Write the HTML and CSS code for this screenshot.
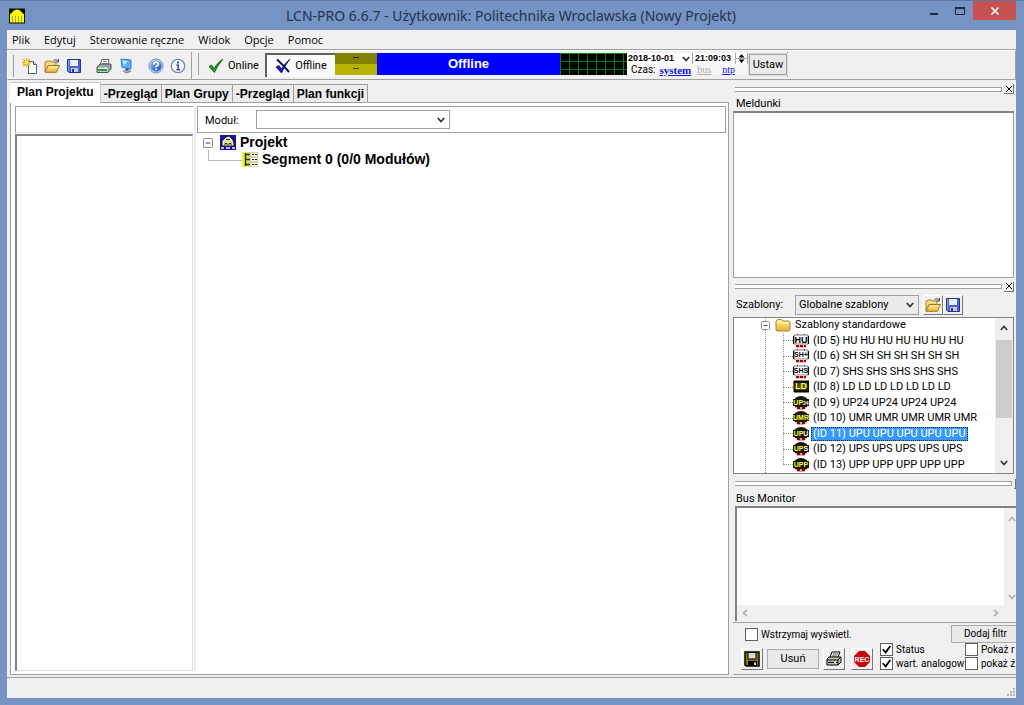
FILE: index.html
```html
<!DOCTYPE html>
<html lang="pl">
<head>
<meta charset="utf-8">
<title>LCN-PRO 6.6.7</title>
<link rel="stylesheet" href="styles.css">
</head>
<body>
<svg class="defs" aria-hidden="true">
  <defs>
    <linearGradient id="gFolder" x1="0" y1="0" x2="0" y2="1"><stop offset="0" stop-color="#fff0a0"/><stop offset="1" stop-color="#e6b030"/></linearGradient>
    <linearGradient id="gBlue" x1="0" y1="0" x2="1" y2="1"><stop offset="0" stop-color="#8ab4f4"/><stop offset="1" stop-color="#1c50b8"/></linearGradient>
  </defs>
  <symbol id="open" viewBox="0 0 16 16">
    <path d="M1 14V4h1l1-1h4l1 1h4v3" fill="#f4d880" stroke="#a8822c"/>
    <path d="M1 14.3 4 7.5h11.5L12.3 14.3z" fill="url(#gFolder)" stroke="#a07818"/>
    <path d="M9.500 2.500q2.500-2 4.500.500M14.500 1v3h-3" fill="none" stroke="#3c4c68"/>
  </symbol>
  <symbol id="save" viewBox="0 0 16 16">
    <path d="M1.500 1.500h13v13H3l-1.500-1.500z" fill="#4a62d0" stroke="#26349a"/>
    <path d="M4 2h8v6H4z" fill="#e8f0ff"/><path d="M5 10h7v4H5z" fill="#c8ccd8"/><path d="M6 11h2v3H6z" fill="#2c3c90"/>
    <path d="M2.500 2v11" stroke="#8c9cf0"/>
  </symbol>
  <symbol id="chev" viewBox="0 0 8 8"><path d="M.8 2 4 5.500 7.200 2" fill="none" stroke="currentColor" stroke-width="1.700"/></symbol>
  <symbol id="cross" viewBox="0 0 8 8"><path d="M1 1l6 6M7 1 1 7" stroke="currentColor"/></symbol>
  <symbol id="minus" viewBox="0 0 9 9"><rect x=".5" y=".5" width="8" height="8" rx="1" fill="#fff" stroke="#919191"/><path d="M2.500 4.500h4" stroke="#37489a"/></symbol>
  <symbol id="boxmod" viewBox="0 0 16 14">
    <path d="M1 1h14v9H1z" fill="#fff" stroke="#777"/><path d="M.5 2v8M15.500 2v8" stroke="#000"/><path d="M4 0h1M11 0h1" stroke="#b00" stroke-width="2"/>
    <path d="M3 10h10v4H3z" fill="#f0b8b8"/><path d="M3 12h3M7 12h3M11 12h2" stroke="#a00010" stroke-width="2"/>
  </symbol>
  <symbol id="ldmod" viewBox="0 0 16 14">
    <path d="M1 1h15v11H1z" fill="#141400" stroke="#000"/><path d="M3 3h11v7H3z" fill="#4c4c00"/><path d="M0 3h2M0 6h2M0 9h2" stroke="#d01010"/>
  </symbol>
  <symbol id="roundmod" viewBox="0 0 16 14">
    <ellipse cx="8" cy="6.500" rx="8" ry="6.500" fill="#181808"/><path d="M0 3h16v7H0z" fill="#181808"/><path d="M2 11h12l-3 3H5z" fill="#dca0a0"/><path d="M4 12h3M9 12h3" stroke="#900010" stroke-width="2"/>
  </symbol>
</svg>

<header class="titlebar">
  <svg class="app" viewBox="0 0 16 15"><path d="M0 0h16v15H0z" fill="#101000"/><path d="M1 14V6l4-4 3-1 3 1 4 4v8h-2V8h-1v6h-2V8H9v6H7V8H6v6H4V8H3v6z" fill="#ff0"/><path d="M3.500 8v6M6.500 8v6M9.500 8v6M12.500 8v6" stroke="#a8a850"/></svg>
  <h1>LCN-PRO 6.6.7 - Użytkownik: Politechnika Wroclawska (Nowy Projekt)</h1>
  <div class="winbtns">
    <button aria-label="Minimalizuj"><svg viewBox="0 0 10 10"><path d="M1 8h8" stroke="#1c2a44" stroke-width="2"/></svg></button>
    <button aria-label="Maksymalizuj"><svg viewBox="0 0 10 10"><path d="M.5 1.500h9v7h-9z" fill="none" stroke="#1c2a44"/><path d="M0 2h10" stroke="#1c2a44" stroke-width="2"/></svg></button>
    <button class="close" aria-label="Zamknij"><svg viewBox="0 0 10 10"><path d="M1.500 1.500l7 7M8.500 1.500l-7 7" stroke="#fff" stroke-width="1.700"/></svg></button>
  </div>
</header>

<div class="client">
  <nav class="menu">
    <button>Plik</button><button>Edytuj</button><button>Sterowanie ręczne</button><button>Widok</button><button>Opcje</button><button>Pomoc</button>
  </nav>

  <div class="rebar">
    <div class="band icons">
      <button aria-label="Nowy"><svg viewBox="0 0 16 16"><path d="M6.500 3.500h5l3 3v9h-8z" fill="#f8fbff" stroke="#53657e"/><path d="M11.500 3.500v3h3" fill="#c6d4e8" stroke="#53657e"/><path d="M4.500 0v9M0 4.500h9M1.300 1.300l6.400 6.400M7.700 1.300 1.300 7.700" stroke="#f0a800" stroke-width="1.300"/><circle cx="4.500" cy="4.500" r="2" fill="#ffe860"/></svg></button>
      <button aria-label="Otwórz"><svg><use href="#open"/></svg></button>
      <button aria-label="Zapisz"><svg><use href="#save"/></svg></button>
      <button class="gap" aria-label="Drukuj"><svg viewBox="0 0 16 16"><path d="M4 7 6 1.500h7L12 7" fill="#fff" stroke="#667"/><path d="M7 3.500h4M6 5.500h5" stroke="#889"/><path d="M1 9l3-3h11v5l-3 3.500H1z" fill="#98a4a8" stroke="#4a565c"/><path d="M2 9.500h9.500v4H2z" fill="#eef2f2"/><path d="M2 12h9" stroke="#28a038" stroke-width="2"/></svg></button>
      <button aria-label="Komputer"><svg viewBox="0 0 16 16"><path d="M3 1l10 1v9L4 9.500z" fill="#58b0f8" stroke="#3c78d0"/><path d="M4.500 2.500l5 .5L6 8z" fill="#c4eaff"/><path d="M9 10.500v2" stroke="#446" stroke-width="3"/><path d="M5.500 13l6-1 1 1.500-5 1.500z" fill="#b4bcd0" stroke="#707c98"/></svg></button>
      <button class="gap" aria-label="Pomoc"><svg viewBox="0 0 16 16"><circle cx="8" cy="8" r="7" fill="#d8e4fa" stroke="#6d8cc8"/><circle cx="8" cy="8" r="5.700" fill="url(#gBlue)"/><path d="M5.800 6.500q0-2.300 2.300-2.300T10.400 6.300Q10.400 7.500 8.200 8.300V9.500M8.200 10.700v1.600" fill="none" stroke="#fff" stroke-width="1.700"/></svg></button>
      <button aria-label="Informacje"><svg viewBox="0 0 16 16"><circle cx="8" cy="8" r="6.700" fill="#fbfdff" stroke="#7484b0" stroke-width="1.300"/><path d="M8 3.500v2" stroke="#2a48a0" stroke-width="2"/><path d="M6.500 7h1.700v4.500M6.500 11.700h3.500" fill="none" stroke="#2a48a0" stroke-width="1.400"/></svg></button>
    </div>
    <div class="band tools">
      <button class="mode"><svg viewBox="0 0 16 16"><path d="M1 8.500 3.500 7 6 10.500Q10 4 15 1 9.500 7.500 6.500 14.500z" fill="#18a018" stroke="#064806" stroke-width=".7"/></svg>Online</button>
      <button class="mode on"><svg viewBox="0 0 16 16"><path d="M1 9 4 7.500 6.500 11Q10 5 15 1 9.500 8 6.500 15z" fill="#1414d0" stroke="#000040" stroke-width=".7"/><path d="M2 1.500Q7 6 14 14" stroke="#101060" stroke-width="2" fill="none"/></svg>Offline</button>
      <div class="olive"><span>--</span><span>--</span></div>
      <div class="state">Offline</div>
      <div class="scope"></div>
      <div class="clock">
        <div class="line">
          <input class="date" aria-label="Data" value="2018-10-01"><svg class="chev"><use href="#chev"/></svg>
          <input class="time" aria-label="Godzina" value="21:09:03">
          <svg class="spin" viewBox="0 0 13 11"><path d="M.5 0v11M12.500 0v11M0 5.500h13" stroke="#aaa"/><path d="M3.500 4.500 6.500 1l3 3.500zM3.500 6.500l3 3.500 3-3.500z" fill="#000"/></svg>
        </div>
        <div class="line src"><span>Czas:</span><a class="b" href="#">system</a><a class="off" href="#">bus</a><a href="#">ntp</a></div>
      </div>
      <button class="set">Ustaw</button>
    </div>
  </div>

  <main class="main">
    <section class="left">
      <div class="tabs" role="tablist">
        <button role="tab" class="cur">Plan Projektu</button><button role="tab">-Przegląd</button><button role="tab">Plan Grupy</button><button role="tab">-Przegląd</button><button role="tab">Plan funkcji</button>
      </div>
      <div class="page">
        <div class="side"><div class="box"></div><div class="list"></div></div>
        <div class="plan">
          <div class="modbar"><label for="mod">Moduł:</label><span class="sel wide"><select id="mod"><option></option></select><svg class="chev"><use href="#chev"/></svg></span></div>
          <ul class="ptree">
            <li><svg class="exp"><use href="#minus"/></svg><svg class="pic" viewBox="0 0 16 15"><path d="M0 0h16v15H0z" fill="#1414a0"/><path d="M2 9V6l4-4 3-1 4 4 1 4v2H2z" fill="#e8e4a0" stroke="#000" stroke-width=".7"/><path d="M6 4.500h4M5 8.500h2v3H5zM9 8.500h2v3H9z" stroke="#303030" fill="#fff"/><path d="M1 13h3M6 13h4M12 13h3" stroke="#b8bcf8" stroke-width="2"/></svg>Projekt</li>
            <li class="sub"><svg class="pic" viewBox="0 0 16 15"><path d="M0 0h16v15H0z" fill="#d4d4a0"/><path d="M0 0h5v15H0z" fill="#f4f420"/><path d="M3.500 1v13M3 2.500h5M3 7.500h5M3 12.500h5" stroke="#303000" stroke-width="1.500"/><path d="M9 1h6v3H9zM9 6h6v3H9zM9 11h6v3H9z" fill="#fff"/><path d="M10 2.500h2M13 2.500h2M10 7.500h2M13 7.500h2M10 12.500h2M13 12.500h2" stroke="#111"/></svg>Segment 0 (0/0 Modułów)</li>
          </ul>
        </div>
      </div>
    </section>

    <aside class="right">
      <div class="grip"><i></i><button aria-label="Zamknij"><svg><use href="#cross"/></svg></button></div>
      <h2 class="cap">Meldunki</h2>
      <div class="msgs"></div>
      <div class="grip"><i></i><button aria-label="Zamknij"><svg><use href="#cross"/></svg></button></div>
      <div class="tplbar"><label for="tpl">Szablony:</label><span class="sel gray"><select id="tpl"><option>Globalne szablony</option></select><svg class="chev"><use href="#chev"/></svg></span>
        <button class="sq" aria-label="Otwórz"><svg><use href="#open"/></svg></button><button class="sq" aria-label="Zapisz"><svg><use href="#save"/></svg></button></div>
      <div class="tpl">
        <ul class="ttree">
          <li class="root"><svg class="exp"><use href="#minus"/></svg><svg class="fold" viewBox="0 0 16 14"><path d="M1 12V3l1.500-1.500h4L8 3h6l1 1v8l-1 1H2z" fill="url(#gFolder)" stroke="#a8862c"/><path d="M2 5h12" stroke="#fff8c8"/></svg><span>Szablony standardowe</span></li>
          <li><svg class="m w big"><use href="#boxmod"/><text x="8" y="9">HU</text></svg><span>(ID 5) HU HU HU HU HU HU HU</span></li>
          <li><svg class="m w"><use href="#boxmod"/><text x="8" y="8">SH+</text></svg><span>(ID 6) SH SH SH SH SH SH SH</span></li>
          <li><svg class="m w"><use href="#boxmod"/><text x="8" y="8">SHS</text></svg><span>(ID 7) SHS SHS SHS SHS SHS</span></li>
          <li><svg class="m big"><use href="#ldmod"/><text x="8" y="9">LD</text></svg><span>(ID 8) LD LD LD LD LD LD LD</span></li>
          <li><svg class="m"><use href="#roundmod"/><text x="8" y="9">UP<tspan class="lo">24</tspan></text></svg><span>(ID 9) UP24 UP24 UP24 UP24</span></li>
          <li><svg class="m"><use href="#roundmod"/><text x="8" y="9">UMR</text></svg><span>(ID 10) UMR UMR UMR UMR UMR</span></li>
          <li><svg class="m"><use href="#roundmod"/><text x="8" y="9">UP<tspan class="hi">U</tspan></text></svg><span class="hit">(ID 11) UPU UPU UPU UPU UPU</span></li>
          <li><svg class="m"><use href="#roundmod"/><text x="8" y="9">UP<tspan class="hi">S</tspan></text></svg><span>(ID 12) UPS UPS UPS UPS UPS</span></li>
          <li><svg class="m"><use href="#roundmod"/><text x="8" y="9">UPP</text></svg><span>(ID 13) UPP UPP UPP UPP UPP</span></li>
        </ul>
        <div class="vbar"><svg class="chev up"><use href="#chev"/></svg><i></i><svg class="chev"><use href="#chev"/></svg></div>
      </div>
      <div class="grip cut"><i></i><button aria-label="Zamknij"></button></div>
      <h2 class="cap">Bus Monitor</h2>
      <div class="bus">
        <div class="log"></div>
        <div class="vbar dim"><svg class="chev up"><use href="#chev"/></svg><svg class="chev"><use href="#chev"/></svg></div>
        <div class="hbar"><svg class="chev lt"><use href="#chev"/></svg><svg class="chev rt"><use href="#chev"/></svg></div>
      </div>
      <div class="opts">
        <div class="ocol">
          <label class="ck"><input type="checkbox">Wstrzymaj wyświetl.</label>
          <div class="obtns">
            <button class="sq" aria-label="Zapisz"><svg viewBox="0 0 16 16"><path d="M1 1h14v14H2l-1-1z" fill="#808000" stroke="#000" stroke-width="1.500"/><path d="M4 1.500h8V8H4z" fill="#d8d8d8" stroke="#000"/><path d="M4 10h9v5H4z" fill="#000"/><path d="M10 11.500h2V14h-2z" fill="#ddd"/></svg></button>
            <button class="del">Usuń</button>
            <button class="sq" aria-label="Drukuj"><svg viewBox="0 0 16 16"><path d="M4 6 6 1h8l-2 5" fill="#fff" stroke="#000"/><path d="M7 3h5M6 5h5" stroke="#000" stroke-width=".7"/><path d="M1 8l2-2h12v5l-3 3H1z" fill="#c8c8c0" stroke="#000"/><path d="M1 9h11v5M12 9l3-3M2 11.500h10" stroke="#000" fill="none"/><path d="M8 11.500h2" stroke="#dd0" stroke-width="1.500"/></svg></button>
            <button class="sq rec" aria-label="Nagrywaj"><svg viewBox="0 0 16 16"><path d="M5 0h6l5 5v6l-5 5H5l-5-5V5z" fill="#c80808"/><text x="8" y="10.500">REC</text></svg></button>
          </div>
        </div>
        <div class="ogrid">
          <button class="add">Dodaj filtr</button>
          <label class="ck"><input type="checkbox" checked>Status</label>
          <label class="ck"><input type="checkbox">Pokaż r</label>
          <label class="ck"><input type="checkbox" checked>wart. analogow</label>
          <label class="ck"><input type="checkbox">pokaż ź</label>
        </div>
      </div>
    </aside>
  </main>

  <footer class="status"><svg viewBox="0 0 10 10"><path d="M7 1h2M7 4h2M7 7h2M4 4h2M4 7h2M1 7h2" stroke="#b4b4b4" stroke-width="2"/></svg></footer>
</div>
</body>
</html>
```

FILE: styles.css
```css
* { box-sizing: border-box; }
html, body { height: 100%; margin: 0; }
body {
  display: flex; flex-direction: column; overflow: hidden;
  padding: 0 8px 7px 7px; background: #7593c3; color: #000;
  border-top: 1px solid #5a77a8;
  font: 10px/14px Roboto, "Liberation Sans", sans-serif;
}
button, input, select { font: inherit; color: inherit; margin: 0; padding: 0; border: 0; border-radius: 0; background: none; }
h1, h2, ul { margin: 0; padding: 0; font: inherit; list-style: none; }
svg { display: block; flex: none; width: 16px; height: 16px; }
.defs { position: absolute; width: 0; height: 0; }

.titlebar { display: flex; align-items: center; flex: none; height: 29px; }
.titlebar .app { margin-left: 2px; }
.titlebar h1 { flex: 1; text-align: center; padding-left: 76px; font: 14px/20px "Noto Sans", "Open Sans", sans-serif; color: #26344c; }
.winbtns { display: flex; align-self: flex-start; }
.winbtns button { display: grid; place-items: center; width: 26px; height: 19px; }
.winbtns svg { width: 10px; height: 10px; }
.winbtns .close { width: 43px; background: #c75050; }

.client { flex: 1; min-height: 0; display: flex; flex-direction: column; background: #f0f0f0; }
.menu { flex: none; display: flex; gap: 14px; height: 20px; padding-left: 5px; border-bottom: 1px solid #a0a0a0; font: 11px/18px "Open Sans", sans-serif; }

.rebar { flex: none; display: flex; height: 30px; border: 1px solid #fff; border-bottom-color: #a0a0a0; padding-top: 1px; border-right-color: #a0a0a0; }
.band { display: flex; align-items: center; height: 27px; border-right: 1px solid #a0a0a0; }
.icons { width: 184px; padding-left: 13px; gap: 6px; }
.icons::before, .tools::before { content: ""; width: 1px; height: 22px; background: #a0a0a0; margin-left: -8px; margin-right: 2px; }
.icons .gap { margin-left: 8px; }
.tools { margin-left: 4px; padding-left: 10px; align-items: stretch; height: 25px; padding-top: 1px; }
.tools::before { margin-right: 3px; }
.mode { display: flex; align-items: center; justify-content: center; gap: 4px; width: 63px; padding-top: 2px; font-size: 11px; }
.mode.on { width: 70px; background: #fafafa; border-top: 2px solid #606060; border-left: 2px solid #606060; padding-top: 0; }
.olive { width: 42px; display: grid; grid-template-rows: 1fr 1fr; height: 22px; background: linear-gradient(#828200 50%, #b4b400 50%); text-align: center; line-height: 10px; }
.state { width: 183px; height: 22px; background: #0000ff; color: #fff; text-align: center; font: bold 13px/22px "Liberation Sans", sans-serif; }
.scope {
  width: 67px; height: 22px; background-color: #000;
  background-image: linear-gradient(90deg, #008000 1px, transparent 1px), linear-gradient(#008000 1px, transparent 1px);
  background-size: 9px 22px, 67px 8px;
}
.clock { width: 122px; height: 22px; background: #fff; border-bottom: 1px solid #a0a0a0; }
.line { display: flex; height: 11px; align-items: center; }
.line input { height: 11px; font: bold 9px/11px "Liberation Sans", sans-serif; outline: 0; }
.line .date { width: 55px; padding-left: 1px; }
.line .time { width: 43px; margin-left: 2px; padding-left: 2px; border-left: 1px solid #a0a0a0; }
.chev { width: 8px; height: 8px; color: #333; }
.spin { width: 13px; height: 11px; }
.src { line-height: 10px; padding-left: 4px; gap: 4px; background: #f6f6f6; }
.src a { color: #1010e0; font: 10px/10px "Liberation Serif", serif; }
.src a.b { font-weight: bold; font-size: 11px; }
.src a.off { color: #aaa; margin: 0 7px 0 2px; }
.set { width: 38px; height: 21px; margin-top: 1px; border: 1px solid #a0a0a0; outline: 1px solid #ddd; background: #e9e9e9; font-size: 11px; }

.main { flex: 1; min-height: 0; display: flex; gap: 4px; padding: 2px 0 2px 3px; }
.left { flex: 1; min-width: 0; display: flex; flex-direction: column; }
.tabs { display: flex; align-items: flex-end; height: 20px; font: bold 12px/16px "Liberation Sans", sans-serif; }
.tabs button { height: 18px; padding: 0 3px; border: 1px solid #a0a0a0; border-width: 1px 1px 0 0; background: #ececec; white-space: nowrap; }
.tabs .cur { height: 21px; padding: 0 6px 3px 7px; background: #fff; margin-bottom: -1px; border-color: #c8c8c8; position: relative; }
.page { flex: 1; min-height: 0; display: flex; border: 1px solid #a0a0a0; background: #fff; padding: 3px 2px 3px 4px; }
.side { width: 178px; display: flex; flex-direction: column; gap: 1px; }
.box { height: 27px; border: 1px solid #a0a0a0; border-right: 0; border-bottom-color: #ddd; }
.list { flex: 1; border: 1px solid #ddd; border-top: 2px solid #828282; border-left: 2px solid #828282; }
.plan { flex: 1; min-width: 0; margin-left: 1px; border-left: 2px solid #ededed; }
.modbar { display: flex; align-items: center; height: 27px; margin-left: 1px; padding-left: 7px; border: 1px solid #a0a0a0; }
.modbar label { width: 51px; padding-top: 3px; font-size: 11px; }
.sel { display: grid; align-items: center; border: 1px solid #a0a0a0; background: #fff; height: 19px; }
.sel > * { grid-area: 1 / 1; }
.sel select { appearance: none; width: 100%; height: 17px; padding-left: 3px; outline: 0; }
.sel .chev { justify-self: end; margin-right: 4px; pointer-events: none; }
.sel.wide { width: 194px; }
.ptree { padding: 1px 0 0 7px; font: bold 14px/17px "Liberation Sans", sans-serif; }
.ptree li { display: flex; align-items: center; height: 17px; gap: 4px; }
.ptree .exp { width: 10px; height: 10px; margin-right: 3px; }
.ptree .pic { height: 15px; }
.ptree .sub::before { content: ""; width: 33px; height: 10px; margin: -9px -4px 0 5px; border: 1px solid #bbb; border-width: 0 0 1px 1px; }

.right { flex: none; width: 283px; display: flex; flex-direction: column; padding-top: 1px; overflow: hidden; }
.grip { flex: none; display: flex; align-items: center; gap: 2px; height: 12px; padding: 0 2px 0 2px; }
.grip i { flex: 1; height: 5px; border: 1px solid #a0a0a0; border-left: 0; background: #fff; }
.grip button { display: grid; place-items: center; width: 10px; height: 10px; border: 1px solid #777; border-width: 0 1px 1px 0; }
.grip svg { width: 8px; height: 8px; }
.grip.cut { margin-top: 4px; padding-right: 0; }
.grip.cut button { width: 2px; }
.cap { flex: none; height: 16px; padding-left: 3px; font-size: 11px; line-height: 18px; }
.msgs { flex: 166 0 0; margin-right: 2px; border: 1px solid #a0a0a0; border-top: 2px solid #828282; background: #fff; margin-bottom: 3px; }
.tplbar { flex: none; display: flex; align-items: center; height: 24px; padding-left: 3px; }
.tplbar label { width: 59px; font-size: 11px; }
.sel.gray { width: 124px; height: 20px; background: #ebebeb; margin-right: 4px; font-size: 11px; }
.sq { display: grid; place-items: center; width: 20px; height: 20px; border: 1px solid #fff; border-right-color: #777; border-bottom-color: #777; }
.tpl { flex: 157 0 0; min-height: 0; display: flex; margin-right: 2px; border: 1px solid #828282; background: #fff; }
.ttree { flex: 1; display: grid; grid-template-rows: repeat(10, minmax(0, 1fr)); background: repeating-linear-gradient(#999 0 1px, #fff 1px 2px) 31px 0 / 1px 100% no-repeat; font-size: 11px; }
.ttree li { display: flex; align-items: center; padding-left: 49px; min-height: 0; line-height: 14px; white-space: nowrap; background: repeating-linear-gradient(#999 0 1px, #fff 1px 2px) 49px 0 / 1px 100% no-repeat; }
.ttree li:last-child { background-size: 1px 50%; }
.ttree li::before { content: ""; width: 10px; border-top: 1px dotted #999; }
.ttree .root { padding-left: 27px; background: none; }
.ttree .root::before { display: none; }
.ttree .exp { width: 9px; height: 9px; margin-right: 5px; }
.ttree .fold { height: 14px; margin-right: 2px; }
.m { height: 14px; margin-right: 2px; }
.m text, .rec text { font: bold 7px "Liberation Sans", sans-serif; text-anchor: middle; fill: #ffff30; }
.m .lo { fill: #fff; font-size: 5px; }
.m .hi { fill: #fff; }
.m.big text { font-size: 9px; }
.m.w text { fill: #000; }
.rec text { fill: #fff; }
.ttree span { padding: 0 2px; }
.ttree .hit { background: #3399ff; color: #fff; outline: 1px dotted #223; outline-offset: -1px; }
.vbar { flex: none; display: flex; flex-direction: column; align-items: center; gap: 8px; width: 18px; padding: 6px 0; background: #f0f0f0; }
.vbar i { width: 16px; height: 78px; background: #cdcdcd; }
.vbar .chev:last-child { margin-top: auto; }
.up { transform: rotate(180deg); }
.lt { transform: rotate(90deg); }
.rt { transform: rotate(-90deg); }
.bus { flex: 115 0 0; min-height: 0; display: grid; grid-template: 1fr 16px / 1fr 12px; margin-left: 2px; border-top: 2px solid #828282; border-left: 2px solid #828282; }
.log { background: #fff; }
.dim { width: 16px; padding: 7px 0 4px; }
.dim .chev, .hbar .chev { color: #b0b0b0; }
.hbar { display: flex; justify-content: space-between; align-items: center; padding: 0 4px; }
.opts { flex: none; display: flex; height: 53px; margin-top: 1px; padding: 2px 0 0 8px; border-top: 1px solid #a0a0a0; border-bottom: 1px solid #a0a0a0; }
.ocol { flex: none; width: 139px; display: flex; flex-direction: column; justify-content: space-between; padding-top: 3px; }
.ocol .ck { padding-left: 4px; }
.ck { display: flex; align-items: center; gap: 3px; white-space: nowrap; height: 14px; }
.ck input { appearance: none; flex: none; display: grid; place-items: center; width: 13px; height: 13px; border: 1px solid #606060; background: #fff; }
.ck input:checked::before { content: ""; width: 9px; height: 9px; background: #000; clip-path: polygon(0 45%, 18% 38%, 38% 62%, 85% 0, 100% 10%, 42% 95%); }
.obtns { display: flex; align-items: center; gap: 4px; padding-bottom: 4px; }
.obtns .sq { width: 22px; height: 22px; border-color: #fff #777 #777 #fff; }
.obtns .rec { margin-left: 2px; }
.del { width: 52px; height: 20px; border: 1px solid #acacac; background: #e9e9e9; font-size: 11px; }
.ogrid { flex: 1; display: grid; grid-template: 18px 14px 14px / 85px 1fr; }
.add { grid-column: 1 / -1; justify-self: end; width: 65px; height: 18px; text-align: left; padding-left: 12px; border: 1px solid #acacac; border-right: 0; background: #e9e9e9; }

.status { flex: none; display: flex; justify-content: flex-end; align-items: flex-end; height: 21px; border-top: 1px solid #a0a0a0; }
.status svg { width: 10px; height: 10px; }
```
